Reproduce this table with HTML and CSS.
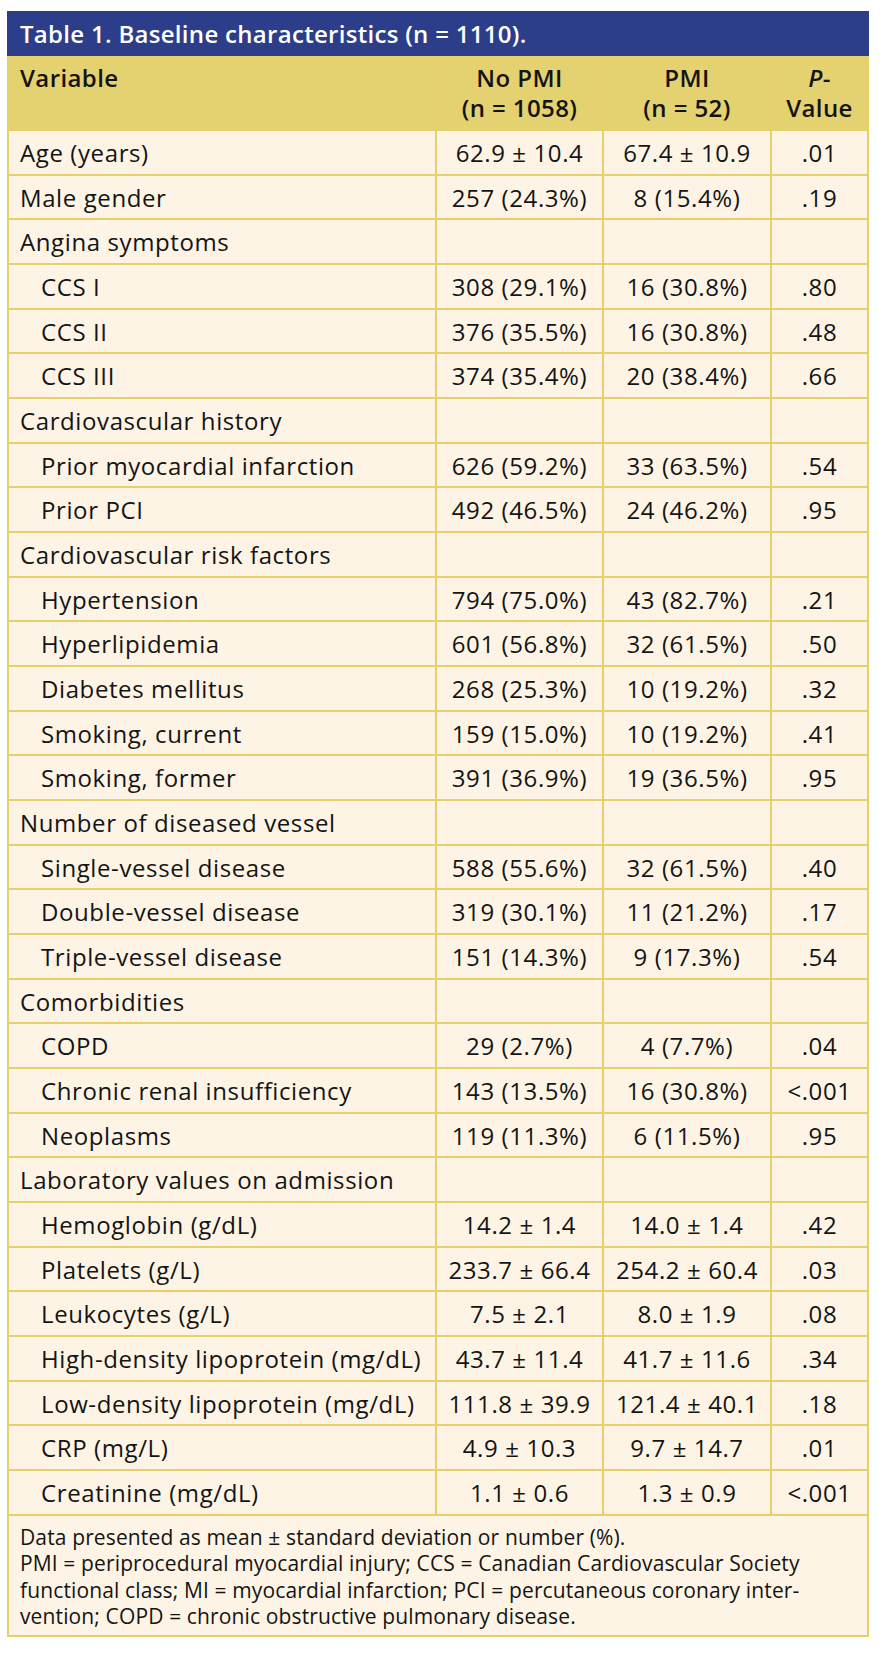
FILE: index.html
```html
<!DOCTYPE html>
<html lang="en">
<head>
<meta charset="utf-8">
<title>Table 1. Baseline characteristics</title>
<link rel="stylesheet" href="styles.css">
</head>
<body>
<div class="table-box">
  <div class="table-title">Table 1. Baseline characteristics (n = 1110).</div>
  <table class="data">
    <colgroup>
      <col class="c-var"><col class="c-num"><col class="c-num2"><col class="c-p">
    </colgroup>
    <thead>
      <tr>
        <th class="var">Variable</th>
        <th>No PMI<br>(n = 1058)</th>
        <th>PMI<br>(n = 52)</th>
        <th><i>P</i>-<br>Value</th>
      </tr>
    </thead>
    <tbody>
      <tr><td class="var">Age (years)</td><td>62.9 ± 10.4</td><td>67.4 ± 10.9</td><td>.01</td></tr>
      <tr><td class="var">Male gender</td><td>257 (24.3%)</td><td>8 (15.4%)</td><td>.19</td></tr>
      <tr><td class="var">Angina symptoms</td><td></td><td></td><td></td></tr>
      <tr><td class="var sub">CCS I</td><td>308 (29.1%)</td><td>16 (30.8%)</td><td>.80</td></tr>
      <tr><td class="var sub">CCS II</td><td>376 (35.5%)</td><td>16 (30.8%)</td><td>.48</td></tr>
      <tr><td class="var sub">CCS III</td><td>374 (35.4%)</td><td>20 (38.4%)</td><td>.66</td></tr>
      <tr><td class="var">Cardiovascular history</td><td></td><td></td><td></td></tr>
      <tr><td class="var sub">Prior myocardial infarction</td><td>626 (59.2%)</td><td>33 (63.5%)</td><td>.54</td></tr>
      <tr><td class="var sub">Prior PCI</td><td>492 (46.5%)</td><td>24 (46.2%)</td><td>.95</td></tr>
      <tr><td class="var">Cardiovascular risk factors</td><td></td><td></td><td></td></tr>
      <tr><td class="var sub">Hypertension</td><td>794 (75.0%)</td><td>43 (82.7%)</td><td>.21</td></tr>
      <tr><td class="var sub">Hyperlipidemia</td><td>601 (56.8%)</td><td>32 (61.5%)</td><td>.50</td></tr>
      <tr><td class="var sub">Diabetes mellitus</td><td>268 (25.3%)</td><td>10 (19.2%)</td><td>.32</td></tr>
      <tr><td class="var sub">Smoking, current</td><td>159 (15.0%)</td><td>10 (19.2%)</td><td>.41</td></tr>
      <tr><td class="var sub">Smoking, former</td><td>391 (36.9%)</td><td>19 (36.5%)</td><td>.95</td></tr>
      <tr><td class="var">Number of diseased vessel</td><td></td><td></td><td></td></tr>
      <tr><td class="var sub">Single-vessel disease</td><td>588 (55.6%)</td><td>32 (61.5%)</td><td>.40</td></tr>
      <tr><td class="var sub">Double-vessel disease</td><td>319 (30.1%)</td><td>11 (21.2%)</td><td>.17</td></tr>
      <tr><td class="var sub">Triple-vessel disease</td><td>151 (14.3%)</td><td>9 (17.3%)</td><td>.54</td></tr>
      <tr><td class="var">Comorbidities</td><td></td><td></td><td></td></tr>
      <tr><td class="var sub">COPD</td><td>29 (2.7%)</td><td>4 (7.7%)</td><td>.04</td></tr>
      <tr><td class="var sub">Chronic renal insufficiency</td><td>143 (13.5%)</td><td>16 (30.8%)</td><td>&lt;.001</td></tr>
      <tr><td class="var sub">Neoplasms</td><td>119 (11.3%)</td><td>6 (11.5%)</td><td>.95</td></tr>
      <tr><td class="var">Laboratory values on admission</td><td></td><td></td><td></td></tr>
      <tr><td class="var sub">Hemoglobin (g/dL)</td><td>14.2 ± 1.4</td><td>14.0 ± 1.4</td><td>.42</td></tr>
      <tr><td class="var sub">Platelets (g/L)</td><td>233.7 ± 66.4</td><td>254.2 ± 60.4</td><td>.03</td></tr>
      <tr><td class="var sub">Leukocytes (g/L)</td><td>7.5 ± 2.1</td><td>8.0 ± 1.9</td><td>.08</td></tr>
      <tr><td class="var sub">High-density lipoprotein (mg/dL)</td><td>43.7 ± 11.4</td><td>41.7 ± 11.6</td><td>.34</td></tr>
      <tr><td class="var sub">Low-density lipoprotein (mg/dL)</td><td>111.8 ± 39.9</td><td>121.4 ± 40.1</td><td>.18</td></tr>
      <tr><td class="var sub">CRP (mg/L)</td><td>4.9 ± 10.3</td><td>9.7 ± 14.7</td><td>.01</td></tr>
      <tr><td class="var sub">Creatinine (mg/dL)</td><td>1.1 ± 0.6</td><td>1.3 ± 0.9</td><td>&lt;.001</td></tr>
    </tbody>
  </table>
  <div class="table-note">
    Data presented as mean ± standard deviation or number (%).<br>
    PMI = periprocedural myocardial injury; CCS = Canadian Cardiovascular Society<br>
    functional class; MI = myocardial infarction; PCI = percutaneous coronary inter-<br>
    vention; COPD = chronic obstructive pulmonary disease.
  </div>
</div>
</body>
</html>
```

FILE: styles.css
```css
html, body {
  margin: 0;
  padding: 0;
  background: #ffffff;
}

body {
  font-family: "Open Sans", "Noto Sans", "Liberation Sans", sans-serif;
  color: #141414;
}

.table-box {
  width: 862px;
  margin: 11px 0 0 7px;
}

.table-title {
  height: 45px;
  line-height: 45px;
  padding-left: 13px;
  background: #2c3e89;
  color: #ffffff;
  font-size: 24px;
  font-weight: 600;
  letter-spacing: 0.3px;
  white-space: nowrap;
}

.data {
  width: 862px;
  table-layout: fixed;
  border-collapse: separate;
  border-spacing: 2px;
  background: #e6d06c;
  font-size: 24px;
  letter-spacing: 0.6px;
}

.c-var { width: 426px; }
.c-num { width: 165px; }
.c-num2 { width: 166px; }
.c-p { width: 95px; }

.data th {
  background: #e4d16f;
  font-weight: 600;
  text-align: center;
  vertical-align: top;
  line-height: 30px;
  height: 60px;
  padding: 5px 2px 6px;
  letter-spacing: 0.4px;
}

.data th.var {
  text-align: left;
  padding-left: 11px;
}

.data td {
  background: #fdf4e5;
  text-align: center;
  line-height: 26.67px;
  height: 26.67px;
  padding: 9px 2px 7px;
  white-space: nowrap;
}

.data td.var {
  text-align: left;
  padding-left: 11px;
}

.data td.sub {
  padding-left: 32px;
}

.table-note {
  background: #fdf4e5;
  border: 2px solid #e6d06c;
  border-top: 0;
  padding: 8px 11px 5px;
  font-size: 21px;
  line-height: 26.5px;
  letter-spacing: 0.13px;
  white-space: nowrap;
}
```
